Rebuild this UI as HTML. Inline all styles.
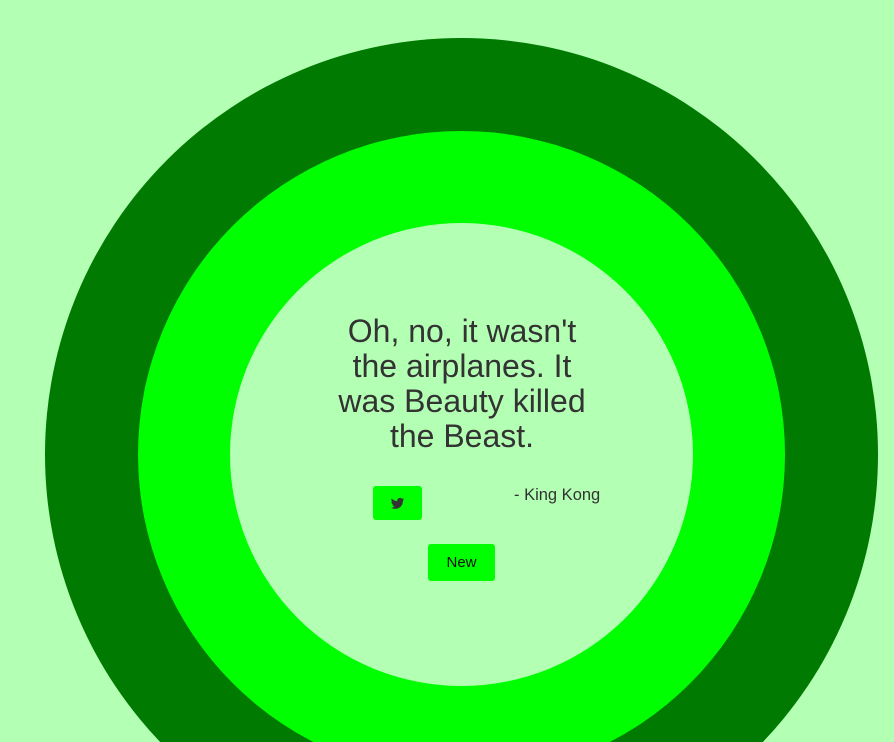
<!DOCTYPE html>
<html><head><meta charset="utf-8"><style>
html,body{margin:0;padding:0;width:894px;height:742px;overflow:hidden;background:#b3ffb3;font-family:"Liberation Sans","DejaVu Sans",sans-serif;}
#w{position:relative;width:894px;height:742px;overflow:hidden;}
#bg{position:absolute;left:0;top:0;}
.q{position:absolute;left:262px;width:400px;text-align:center;color:#333;font-size:32px;line-height:35px;top:314px;}
.tw{position:absolute;left:373px;top:486px;width:49px;height:34px;background:#00ff00;border-radius:3px;}
.new{position:absolute;left:428px;top:544px;width:67px;height:37px;background:#00ff00;border-radius:3px;font-size:15px;line-height:37px;text-align:center;color:#111;}
.au{position:absolute;left:514px;top:486px;font-size:16.5px;color:#333;}
</style></head><body><div id="w">
<svg id="bg" width="894" height="742" viewBox="0 0 894 742">
<circle cx="461.5" cy="454.5" r="416.5" fill="#007a00"/>
<circle cx="461.5" cy="454.5" r="323.5" fill="#00ff00"/>
<circle cx="461.5" cy="454.5" r="231.5" fill="#b3ffb3"/>
</svg>
<div class="q">Oh, no, it wasn't<br>the airplanes. It<br>was Beauty killed<br>the Beast.</div>
<div class="tw"><svg width="49" height="34" viewBox="0 0 49 34"><path fill="#333" d="M31 13.2c-.5.2-1 .4-1.6.4.6-.3 1-.9 1.2-1.5-.5.3-1.1.5-1.7.7-.5-.6-1.2-.9-2-.9-1.5 0-2.7 1.2-2.7 2.7 0 .2 0 .4.1.6-2.3-.1-4.3-1.2-5.6-2.8-.2.4-.4.9-.4 1.4 0 .9.5 1.8 1.2 2.3-.4 0-.9-.1-1.2-.3 0 1.3.9 2.4 2.2 2.7-.2.1-.5.1-.7.1-.2 0-.4 0-.5-.1.3 1.1 1.3 1.9 2.5 1.9-.9.7-2.1 1.2-3.4 1.2H18c1.2.8 2.6 1.2 4.2 1.2 5 0 7.7-4.1 7.7-7.7v-.4c.4-.3.8-.8 1.1-1.3z"/></svg></div>
<div class="au">- King Kong</div>
<div class="new">New</div>
</div></body></html>
